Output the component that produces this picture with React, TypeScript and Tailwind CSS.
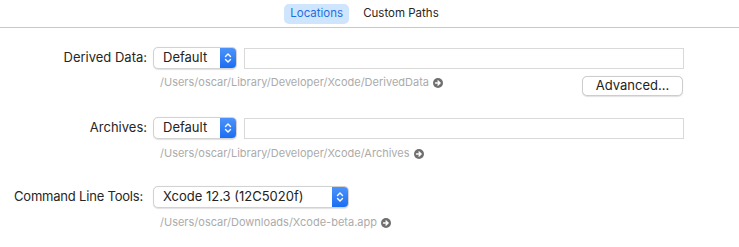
import React from 'react';

const font = { fontFamily: 'Inter, "Liberation Sans", sans-serif' };

const Chevrons: React.FC = () => (
  <svg width="8" height="12" viewBox="0 0 8 12" fill="none" stroke="white" strokeWidth="1.4" strokeLinecap="round" strokeLinejoin="round">
    <path d="M1.5 4.5 L4 2 L6.5 4.5" />
    <path d="M1.5 7.5 L4 10 L6.5 7.5" />
  </svg>
);

const RevealArrow: React.FC = () => (
  <svg width="10" height="10" viewBox="0 0 10 10" className="ml-[4px] shrink-0">
    <circle cx="5" cy="5" r="5" fill="#6f6f6f" />
    <path d="M2.5 5 H7 M5 3 L7.1 5 L5 7" stroke="white" strokeWidth="1.4" fill="none" strokeLinecap="round" strokeLinejoin="round" />
  </svg>
);

const PopUp: React.FC<{ value: string; width: string }> = ({ value, width }) => (
  <div className={`${width} h-[22px] flex items-stretch rounded-[5px] bg-white border border-[#d2d2d2] shadow-[0_0.5px_1px_rgba(0,0,0,0.12)] overflow-hidden`}>
    <div className="flex-1 flex items-center pl-[9px] text-[13px] text-[#222]">{value}</div>
    <div className="w-[16px] flex items-center justify-center bg-gradient-to-b from-[#4b93fa] to-[#1b6cf2]">
      <Chevrons />
    </div>
  </div>
);

const PathLine: React.FC<{ path: string }> = ({ path }) => (
  <div className="flex items-center text-[11px] leading-[13px] text-[#ababab]">
    <span>{path}</span>
    <RevealArrow />
  </div>
);

const App: React.FC = () => {
  return (
    <div className="w-[739px] h-[247px] bg-white overflow-hidden" style={font}>
      {/* Tabs */}
      <div className="h-[28px] border-b border-[#c8c8c8] flex justify-center items-start pt-[4px] gap-[8px] pr-[10px]">
        <div className="h-[20px] px-[6px] rounded-[5px] bg-[#cfe4fd] text-[#1d6fe3] text-[11.5px] flex items-center">Locations</div>
        <div className="h-[20px] px-[6px] text-[#262626] text-[11.5px] flex items-center">Custom Paths</div>
      </div>

      {/* Derived Data */}
      <div className="flex items-center mt-[19px]">
        <div className="w-[147px] text-right text-[13px] text-[#262626]">Derived Data:</div>
        <div className="ml-[6px]"><PopUp value="Default" width="w-[84px]" /></div>
        <div className="ml-[7px] w-[440px] h-[21px] border border-[#d9d9d9] bg-white" />
      </div>
      <div className="ml-[160px] w-[523px] mt-[7px] flex justify-between items-start">
        <PathLine path="/Users/oscar/Library/Developer/Xcode/DerivedData" />
        <button className="w-[101px] h-[20px] rounded-[5px] border border-[#cdcdcd] bg-white shadow-[0_0.5px_1px_rgba(0,0,0,0.12)] text-[13px] text-[#222] flex items-center justify-center">
          Advanced...
        </button>
      </div>

      {/* Archives */}
      <div className="flex items-center mt-[21px]">
        <div className="w-[147px] text-right text-[13px] text-[#262626]">Archives:</div>
        <div className="ml-[6px]"><PopUp value="Default" width="w-[84px]" /></div>
        <div className="ml-[7px] w-[440px] h-[21px] border border-[#d9d9d9] bg-white" />
      </div>
      <div className="ml-[160px] mt-[8px]">
        <PathLine path="/Users/oscar/Library/Developer/Xcode/Archives" />
      </div>

      {/* Command Line Tools */}
      <div className="flex items-center mt-[26px]">
        <div className="w-[143px] text-right text-[13px] tracking-[-0.2px] text-[#262626]">Command Line Tools:</div>
        <div className="ml-[10px]"><PopUp value="Xcode 12.3 (12C5020f)" width="w-[196px]" /></div>
      </div>
      <div className="ml-[160px] mt-[8px]">
        <PathLine path="/Users/oscar/Downloads/Xcode-beta.app" />
      </div>
    </div>
  );
};

export default App;
